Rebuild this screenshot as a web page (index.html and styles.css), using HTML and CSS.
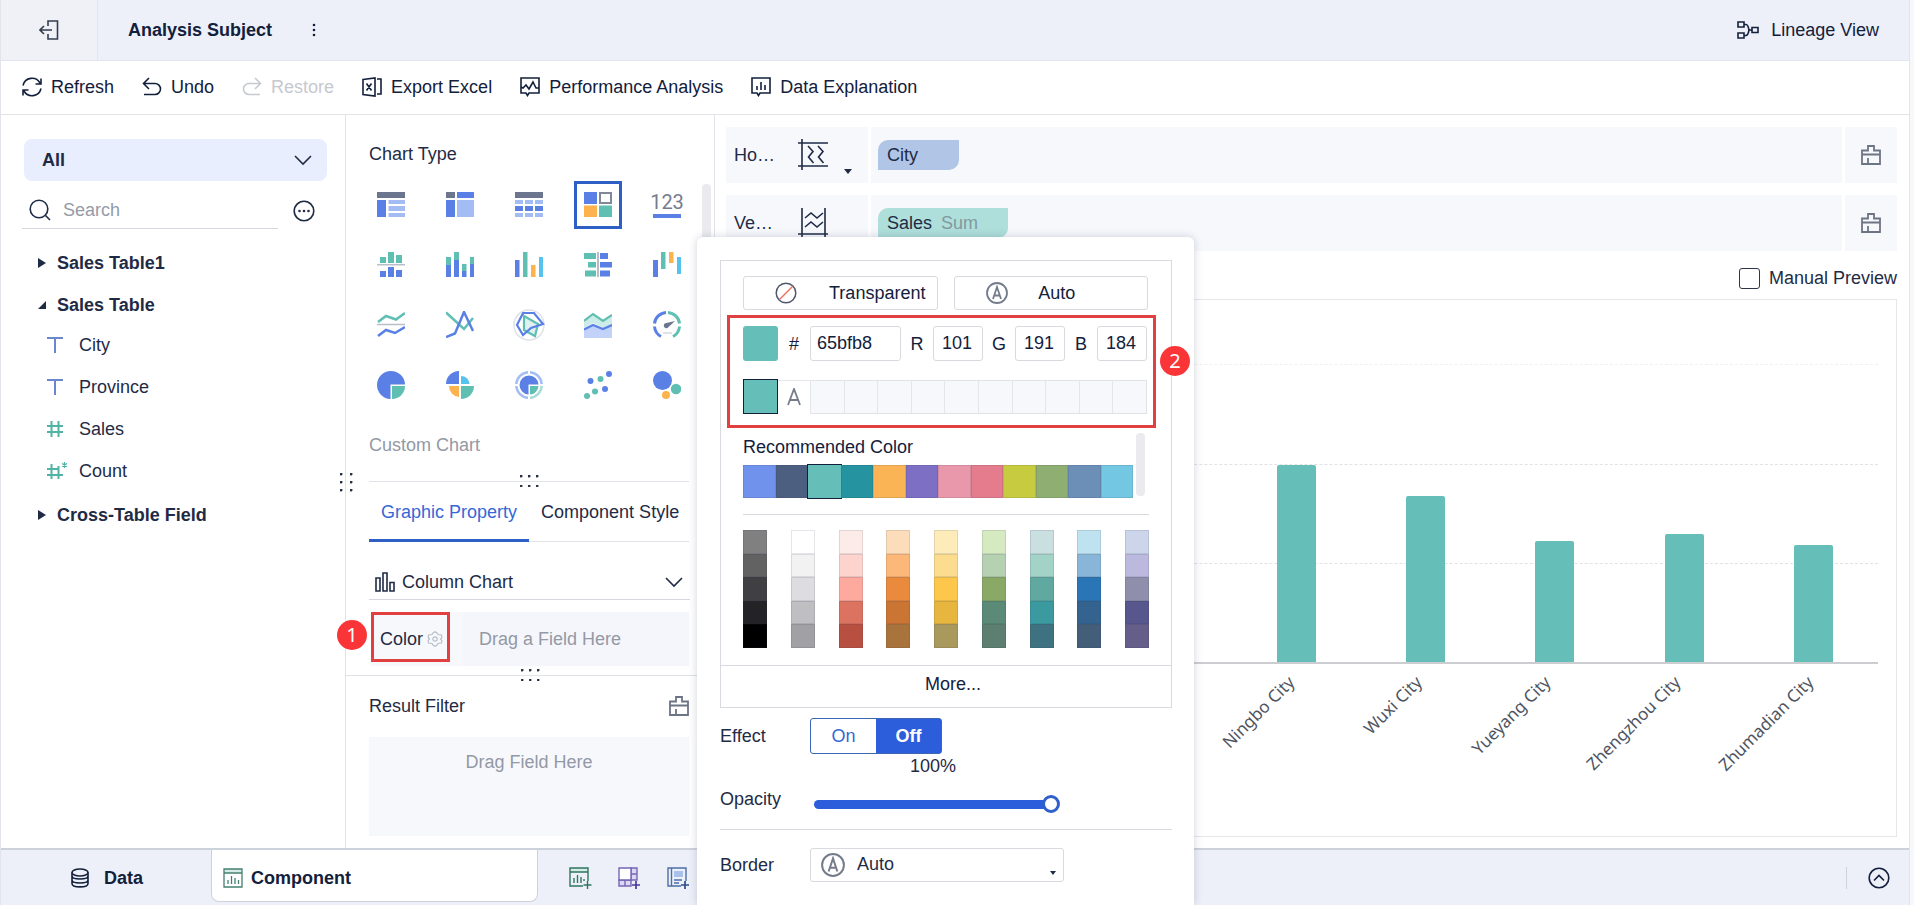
FILE: index.html
```html
<!DOCTYPE html>
<html lang="en">
<head>
<meta charset="utf-8">
<meta name="viewport" content="width=device-width, initial-scale=1">
<title>Analysis Subject</title>
<link rel="stylesheet" href="styles.css">
</head>
<body>
<div class="app">
  <header class="header">
    <button class="exit" aria-label="Exit">
      <svg class="line" width="20" height="20" viewBox="0 0 20 20"><path d="M9 6V1h9.500v18H9v-5M1 10h12M5 6l-4 4 4 4"/></svg>
    </button>
    <h1 class="title">Analysis Subject</h1>
    <button class="icon-btn" aria-label="More actions">
      <svg width="4" height="14" viewBox="0 0 4 14" fill="currentColor"><circle cx="2" cy="2" r="1.300"/><circle cx="2" cy="7" r="1.300"/><circle cx="2" cy="12" r="1.300"/></svg>
    </button>
    <a class="lineage" href="#lineage">
      <svg class="line" width="22" height="18" viewBox="0 0 22 18"><path d="M1 1h6v5H1zM1 12h6v5H1zM15 6.500h6v5h-6zM7 3.500h2c2 0 3 5.500 3 5.500s-1 5.500-3 5.500H7M12 9h3"/></svg>
      Lineage View
    </a>
  </header>

  <nav class="toolbar" aria-label="Tools">
    <button class="tool"><svg class="line" width="20" height="20" viewBox="0 0 20 20"><path d="M1 8.500A9.200 9.200 0 0 1 18 6M19 1.500V7h-5.500M19 11.500A9.200 9.200 0 0 1 2 14M1 18.500V13h5.500"/></svg>Refresh</button>
    <button class="tool"><svg class="line" width="20" height="20" viewBox="0 0 20 20"><path d="M7 1L1.500 6.500 7 12M1.500 6.500H13a5.500 5.500 0 0 1 0 11H2"/></svg>Undo</button>
    <button class="tool" disabled><svg class="line" width="20" height="20" viewBox="0 0 20 20"><path d="M13 1l5.500 5.500L13 12M18.500 6.500H7a5.500 5.500 0 0 0 0 11h11"/></svg>Restore</button>
    <button class="tool"><svg class="line" width="20" height="20" viewBox="0 0 20 20"><path d="M1 2.500L13 1v18L1 17.500zM15 2h4v15h-4M4.500 6.500l5 7M9.500 6.500l-5 7"/></svg>Export Excel</button>
    <button class="tool"><svg class="line" width="20" height="20" viewBox="0 0 20 20"><path d="M1 1h18v15H9l-1.500 2.500L6 16H1zM1 10l2 1 3-3 3 4 4-7 3 6h3"/></svg>Performance Analysis</button>
    <button class="tool"><svg class="line" width="20" height="20" viewBox="0 0 20 20"><path d="M1 1h18v15H9l-1.500 2.500L6 16H1zM6 9v4M10 5v8M14 8v5"/></svg>Data Explanation</button>
  </nav>

  <main class="main">
    <aside class="fields">
      <div class="picker all">
        <select aria-label="Table scope"><option>All</option></select>
        <svg class="line" width="18" height="12" viewBox="0 0 18 12"><path d="M1 2l8 8 8-8"/></svg>
      </div>
      <div class="search-row">
        <label class="search">
          <svg class="line" width="22" height="22" viewBox="0 0 22 22"><circle cx="10" cy="10" r="8.800"/><path d="M16.500 16.500l4.500 4.500"/></svg>
          <input type="search" placeholder="Search" aria-label="Search">
        </label>
        <button class="icon-btn" aria-label="Field options">
          <svg class="line" width="22" height="22" viewBox="0 0 22 22"><circle cx="11" cy="11" r="9.800"/><g fill="currentColor" stroke="none"><circle cx="6.500" cy="11" r="1.300"/><circle cx="11" cy="11" r="1.300"/><circle cx="15.500" cy="11" r="1.300"/></g></svg>
        </button>
      </div>
      <ul class="tree">
        <li class="group"><svg width="8" height="10" viewBox="0 0 8 10"><path fill="currentColor" d="M0 0l8 5-8 5z"/></svg>Sales Table1</li>
        <li class="group"><svg width="8" height="10" viewBox="0 0 8 10"><path fill="currentColor" d="M8 1v8H0z"/></svg>Sales Table</li>
        <li class="field text-field"><svg width="22" height="18" viewBox="0 0 22 18"><path d="M1 2h16M9 2v15"/></svg>City</li>
        <li class="field text-field"><svg width="22" height="18" viewBox="0 0 22 18"><path d="M1 2h16M9 2v15"/></svg>Province</li>
        <li class="field number-field"><svg width="22" height="18" viewBox="0 0 22 18"><path d="M1 6h16M1 12h16M5.500 1v16M12.500 1v16"/></svg>Sales</li>
        <li class="field number-field"><svg width="22" height="18" viewBox="0 0 22 18"><path d="M1 7h12M1 13h16M5.500 2v15M12.500 4v13"/><path class="thin" d="M18.500 0v6M16 1.500l5 3M21 1.500l-5 3"/></svg>Count</li>
        <li class="group"><svg width="8" height="10" viewBox="0 0 8 10"><path fill="currentColor" d="M0 0l8 5-8 5z"/></svg>Cross-Table Field</li>
      </ul>
      <span class="grip grip-side"></span>
    </aside>

    <section class="config">
      <div class="chart-types">
        <h2 class="label">Chart Type</h2>
        <div class="type-grid">
          <button aria-label="Group table"><svg width="28" height="28" viewBox="0 0 28 28"><path fill="#6b768e" d="M0 1h28v6H0z"/><path fill="#5a80e6" d="M0 9h9v17H0z"/><path fill="#a3bdf4" d="M11.500 9H28v4H11.500zM11.500 15H28v5H11.500zM11.500 22H28v4H11.500z"/></svg></button>
          <button aria-label="Cross table"><svg width="28" height="28" viewBox="0 0 28 28"><path fill="#6b768e" d="M0 1h9v6H0z"/><path fill="#5a80e6" d="M11 1h17v6H11zM0 9h9v17H0z"/><path fill="#a3bdf4" d="M11 9h17v17H11z"/></svg></button>
          <button aria-label="Detail table"><svg width="28" height="28" viewBox="0 0 28 28"><path fill="#6b768e" d="M0 1h28v6H0z"/><path fill="#a3bdf4" d="M0 9h8v4H0zM10 9h8v4h-8zM20 9h8v4h-8zM0 22h8v4H0zM10 22h8v4h-8zM20 22h8v4h-8z"/><path fill="#5a80e6" d="M0 15h8v5H0zM10 15h8v5h-8zM20 15h8v5h-8z"/></svg></button>
          <button class="selected" aria-pressed="true" aria-label="Custom chart"><svg width="28" height="28" viewBox="0 0 28 28"><path fill="#5a80e6" d="M0 1h13v12H0z"/><path fill="#fcb34d" d="M0 14.500h13V26H0z"/><path fill="#5fbfb3" d="M15 14.500h13V26H15z"/><path fill="none" stroke="#808899" stroke-width="2" d="M16 2h11v10H16z"/></svg></button>
          <button class="kpi" aria-label="KPI card"><span>123</span></button>

          <button aria-label="Opposed column"><svg width="28" height="28" viewBox="0 0 28 28"><path fill="#5fbfb3" d="M3 6h6v6H3zM11 1h6v11h-6zM19 4h6v8h-6z"/><path fill="#b9bec8" d="M0 13h28v1.500H0z"/><path fill="#5a80e6" d="M3 20h6v6H3zM11 16h6v10h-6zM19 19h6v7h-6z"/></svg></button>
          <button aria-label="Stacked column"><svg width="28" height="28" viewBox="0 0 28 28"><path fill="#5fbfb3" d="M0 6h5v8H0zM8 1h5v8H8zM16 13h4.500v7H16zM24 6h4.500v7H24z"/><path fill="#5a80e6" d="M0 14h5v12H0zM8 9h5v17H8zM16 20h4.500v6H16zM24 13h4.500v13H24z"/></svg></button>
          <button aria-label="Column"><svg width="28" height="28" viewBox="0 0 28 28"><path fill="#5a80e6" d="M0 9h4.500v17H0z"/><path fill="#5fbfb3" d="M8 1h4.500v25H8z"/><path fill="#fcb34d" d="M16 14h4.500v12H16z"/><path fill="#56c3ee" d="M24 6h4.500v20H24z"/></svg></button>
          <button aria-label="Opposed bar"><svg width="28" height="28" viewBox="0 0 28 28"><path fill="#5fbfb3" d="M0 2h12v6H0zM4 11h8v5.500H4zM1 19.500h11v6H1z"/><path fill="#a6adb9" d="M13.200 1h1.600v25h-1.600z"/><path fill="#5a80e6" d="M16 2h8v6h-8zM16 11h12v5.500H16zM16 19.500h10v6H16z"/></svg></button>
          <button aria-label="Waterfall"><svg width="28" height="28" viewBox="0 0 28 28"><path fill="#5a80e6" d="M0 9h5v17H0z"/><path fill="#5fbfb3" d="M8 1h4.500v17H8z"/><path fill="#fcb34d" d="M16 1h4.500v11H16z"/><path fill="#56c3ee" d="M24 6h4.500v17H24z"/></svg></button>

          <button aria-label="Range line"><svg width="28" height="28" viewBox="0 0 28 28" fill="none" stroke-width="2.500"><path stroke="#5fbfb3" d="M1 11l8-6 10 3.500L28 2"/><path stroke="#b9bec8" stroke-width="1.500" d="M0 13.500h28"/><path stroke="#5a80e6" d="M1 25l8-6 9 3 10-6"/></svg></button>
          <button aria-label="Line"><svg width="28" height="28" viewBox="0 0 28 28" fill="none" stroke-width="2.500"><path stroke="#5fbfb3" d="M0 1.500L18 18l9-11"/><path stroke="#5a80e6" d="M0 26l9-3.500L18 1l9 19"/></svg></button>
          <button aria-label="Radar"><svg width="32" height="32" viewBox="0 0 32 32" fill="none" stroke-width="2.200"><circle cx="16" cy="16" r="15" stroke="#dfe2e8" stroke-width="1.500"/><path stroke="#5fbfb3" fill="#dff2ef" d="M11 7l14 8-3 12-11-6z"/><path stroke="#5a80e6" d="M10 4h11l9 11-12 4-8 7-6-10z"/></svg></button>
          <button aria-label="Area"><svg width="28" height="28" viewBox="0 0 28 28"><path fill="#cdebe7" d="M0 9l9-6 10 6 9-4v9l-8 3-11-5-9 5z"/><path fill="#c3d2f8" d="M0 19l9-5 10 4 9-4v13H0z"/><path fill="none" stroke="#5fbfb3" stroke-width="2.200" d="M0 10l9-7 10 7 9-6"/><path fill="none" stroke="#5a80e6" stroke-width="2.200" d="M0 18.500L9 14l10 4 9-4"/></svg></button>
          <button aria-label="Gauge"><svg width="28" height="28" viewBox="0 0 28 28" fill="none" stroke-width="3"><path stroke="#5a80e6" d="M1.500 12.500A12.500 12.500 0 0 1 13 1.500M1.500 15.500A12.500 12.500 0 0 0 8 25.500"/><path stroke="#5fbfb3" d="M15 1.500A12.500 12.500 0 0 1 26.500 12.500M26.500 15.500A12.500 12.500 0 0 1 20 25.500"/><path stroke="#d3d7de" stroke-width="1.500" d="M10 22h9"/><path fill="#6b768e" d="M22 10l-6.500 6a2.600 2.600 0 1 1-2-4z"/></svg></button>

          <button aria-label="Pie"><svg width="28" height="28" viewBox="0 0 28 28"><path fill="#5a80e6" d="M13.500 28A14 14 0 1 1 28 13.500H13.500z"/><path fill="#5fbfb3" d="M15 15h13a13 13 0 0 1-13 13z"/></svg></button>
          <button aria-label="Rose"><svg width="28" height="28" viewBox="0 0 28 28"><path fill="#5a80e6" d="M13 0v13H0A13 13 0 0 1 13 0z"/><path fill="#56c3ee" d="M15 5a8.500 8.500 0 0 1 8.500 8H15z"/><path fill="#fcb34d" d="M3 15h10v11A11 11 0 0 1 3 15z"/><path fill="#5fbfb3" d="M15 15h13a13 13 0 0 1-13 13z"/></svg></button>
          <button aria-label="Multi-layer pie"><svg width="28" height="28" viewBox="0 0 28 28" fill="none"><path stroke="#a3bdf4" stroke-width="2.500" d="M13 1.300A12.700 12.700 0 0 0 1.300 13M15 1.300A12.700 12.700 0 0 1 26.700 13M1.300 15A12.700 12.700 0 0 0 13 26.700"/><path stroke="#a9dcd6" stroke-width="2.500" d="M26.700 15A12.700 12.700 0 0 1 15 26.700"/><path fill="#5a80e6" d="M13.500 23.500A9.500 9.500 0 1 1 23.500 13.500h-10z"/><path fill="#5fbfb3" d="M15 15h8.500a9 9 0 0 1-8.500 8.500z"/></svg></button>
          <button aria-label="Scatter"><svg width="28" height="28" viewBox="0 0 28 28"><g fill="#5a80e6"><circle cx="6.500" cy="10" r="3"/><circle cx="25" cy="3" r="3"/><circle cx="21" cy="18" r="3"/></g><g fill="#5fbfb3"><circle cx="16.500" cy="8" r="3"/><circle cx="11" cy="20.500" r="3"/><circle cx="3" cy="25" r="3"/></g></svg></button>
          <button aria-label="Bubble"><svg width="28" height="28" viewBox="0 0 28 28"><circle cx="9.500" cy="9.500" r="9.500" fill="#5a80e6"/><circle cx="23" cy="18" r="5.200" fill="#5fbfb3"/><circle cx="13" cy="24" r="4" fill="#fcb34d"/></svg></button>
        </div>
        <p class="custom">Custom Chart</p>
        <span class="scrollbar"></span>
        <span class="grip"></span>
      </div>
      <div class="tabs">
        <button class="tab active">Graphic Property</button>
        <button class="tab">Component Style</button>
      </div>
      <div class="picker shape">
        <svg class="line" width="20" height="20" viewBox="0 0 20 20"><path d="M1 6h4v13H1zM8 1h4v18H8zM15 10.500h4V19h-4z"/></svg>
        <select aria-label="Shape"><option>Column Chart</option></select>
        <svg class="line" width="18" height="12" viewBox="0 0 18 12"><path d="M1 2l8 8 8-8"/></svg>
      </div>
      <div class="color-row">
        <button class="color-btn">Color
          <svg width="16" height="16" viewBox="0 0 16 16" fill="none" stroke="#b9bfca" stroke-width="1.200"><path d="M6 2l2-1.300L10 2l1 1.500 3.500.5.300 2.500L13.500 8l1.300 1.500-.3 2.500-3.500.500L10 14l-2 1.300L6 14l-1-1.500L1.500 12l-.3-2.500L2.500 8 1.200 6.500 1.500 4 5 3.500z"/><circle cx="8" cy="8" r="2.200"/></svg>
        </button>
        <div class="drop">Drag a Field Here</div>
        <span class="badge badge-one">1</span>
      </div>
      <div class="filter">
        <span class="grip"></span>
        <div class="filter-head">
          <h2 class="label">Result Filter</h2>
          <button class="icon-btn brush" aria-label="Clear filter"><svg class="line" width="20" height="20" viewBox="0 0 20 20"><path d="M1 5.500h6V1h6v4.500h6V19H1zM1 9.500h18M7 13v6"/></svg></button>
        </div>
        <div class="filter-drop">Drag Field Here</div>
      </div>
    </section>

    <section class="canvas">
      <div class="axes">
        <div class="axis">
          <div class="axis-label"><span>Ho…</span>
            <svg class="line" width="30" height="32" viewBox="0 0 30 32"><path d="M0 4h30M0 27h30M4 0v31M10 7l5 5.500-4.500 5.500 5 6M20 7l5 5.500-4.500 5.500 5 6"/></svg>
            <svg class="caret" width="8" height="5" viewBox="0 0 8 5"><path fill="currentColor" d="M0 0h8L4 5z"/></svg>
          </div>
          <div class="axis-drop"><span class="pill city">City</span></div>
          <button class="axis-clear brush" aria-label="Clear horizontal axis"><svg class="line" width="20" height="20" viewBox="0 0 20 20"><path d="M1 5.500h6V1h6v4.500h6V19H1zM1 9.500h18M7 13v6"/></svg></button>
        </div>
        <div class="axis">
          <div class="axis-label"><span>Ve…</span>
            <svg class="line" width="30" height="32" viewBox="0 0 30 32"><path d="M4 1v30M27 1v30M0 27h30M7 11l6-5 6 5 6-5M7 20l6-5 6 5 6-5"/></svg>
            <svg class="caret" width="8" height="5" viewBox="0 0 8 5"><path fill="currentColor" d="M0 0h8L4 5z"/></svg>
          </div>
          <div class="axis-drop"><span class="pill sales">Sales <span class="agg">Sum</span></span></div>
          <button class="axis-clear brush" aria-label="Clear vertical axis"><svg class="line" width="20" height="20" viewBox="0 0 20 20"><path d="M1 5.500h6V1h6v4.500h6V19H1zM1 9.500h18M7 13v6"/></svg></button>
        </div>
      </div>
      <label class="manual"><input type="checkbox">Manual Preview</label>
      <div class="preview">
        <div class="plot">
          <div class="gridlines"><i></i><i></i><i></i></div>
          <div class="bars" id="bars"></div>
        </div>
        <div class="ticks" id="ticks"></div>
      </div>
    </section>
  </main>

  <footer class="footer">
    <button class="foot-tab data"><svg class="line" width="20" height="20" viewBox="0 0 20 20"><path d="M2 4.500v11c0 4.500 16 4.500 16 0v-11M2 8c0 4 16 4 16 0M2 12c0 4 16 4 16 0"/><ellipse cx="10" cy="4.500" rx="8" ry="3.500"/></svg>Data</button>
    <button class="foot-tab component"><svg width="20" height="20" viewBox="0 0 20 20" fill="none" stroke="#45806f" stroke-width="1.300"><path fill="#d5ebe5" stroke="none" d="M1 1h18v4H1z"/><path d="M1 1h18v18H1zM1 5h18M5 12v4M8.500 8v8M12 10v6M15.500 12v4"/></svg>Component</button>
    <div class="foot-add">
      <button class="icon-btn" aria-label="Add component"><svg width="23" height="23" viewBox="0 0 23 23" fill="none" stroke="#2f7560" stroke-width="1.400"><path fill="#d5ebe5" stroke="none" d="M1 1h18v4H1z"/><path d="M19 14V1H1v18h13M1 5h18M5 11v5M8.500 8v8M12 10v6M15 12v2M18.500 14v8M14.500 18h8"/></svg></button>
      <button class="icon-btn" aria-label="Add dashboard"><svg width="23" height="23" viewBox="0 0 23 23" fill="none" stroke="#7565b5" stroke-width="1.400"><path fill="#dcd7f2" d="M13 1h6v12h-6zM1 13h12v6H1z"/><path fill="#fff" d="M1 1h12v12H1z"/><path d="M13 7h6M7 13v6"/><path stroke="#4a379c" stroke-width="1.700" d="M18 14v8M14 18h8"/></svg></button>
      <button class="icon-btn" aria-label="Add document"><svg width="23" height="23" viewBox="0 0 23 23" fill="none" stroke="#4c6ea8" stroke-width="1.400"><path d="M19 14V1H1v18h13M4.500 1v18M7 13h8M7 16h5"/><path fill="#a9c0ea" stroke="none" d="M7 4h9v6H7z"/><path stroke="#2e4d8b" stroke-width="1.700" d="M18 14v8M14 18h8"/></svg></button>
    </div>
    <div class="foot-right">
      <button class="icon-btn" aria-label="Expand"><svg class="line" width="22" height="22" viewBox="0 0 22 22"><circle cx="11" cy="11" r="9.800"/><path d="M6 13.500l5-5 5 5"/></svg></button>
    </div>
  </footer>

  <div class="popup" role="dialog" aria-label="Color settings">
    <div class="picker-box">
      <div class="presets">
        <button class="preset"><svg width="22" height="22" viewBox="0 0 22 22" fill="none"><circle cx="11" cy="11" r="9.800" stroke="#50586c" stroke-width="1.500"/><path stroke="#f0705f" stroke-width="1.500" d="M4.500 17.500l13-13"/></svg><span>Transparent</span></button>
        <button class="preset"><svg class="auto" width="22" height="22" viewBox="0 0 22 22"><circle cx="11" cy="11" r="10"/><path d="M7 17l4-12 4 12M8.200 13.500h5.600"/></svg><span>Auto</span></button>
      </div>
      <div class="values">
        <div class="rgb">
          <span class="swatch"></span>
          <label for="hex">#</label><input id="hex" class="hex" value="65bfb8">
          <label for="red">R</label><input id="red" value="101">
          <label for="green">G</label><input id="green" value="191">
          <label for="blue">B</label><input id="blue" value="184">
        </div>
        <div class="recent">
          <button class="swatch current" aria-label="Current color"></button>
          <button class="auto-cell" aria-label="Auto color"><svg class="auto" width="14" height="18" viewBox="0 0 14 18"><path d="M1 17L7 1l6 16M3.200 12h7.600"/></svg></button>
          <div class="slots"><i></i><i></i><i></i><i></i><i></i><i></i><i></i><i></i><i></i><i></i></div>
        </div>
        <span class="badge badge-two">2</span>
      </div>
      <div class="recommended">
        <h2 class="label">Recommended Color</h2>
        <div class="strip" id="strip"></div>
        <span class="scrollbar small"></span>
      </div>
      <div class="palette" id="palette"></div>
      <button class="more">More...</button>
    </div>
    <div class="row effect">
      <span class="row-label">Effect</span>
      <div class="toggle"><button>On</button><button class="active" aria-pressed="true">Off</button></div>
    </div>
    <div class="row opacity">
      <label class="row-label" for="opacity">Opacity</label>
      <div class="slider"><output for="opacity">100%</output><input id="opacity" type="range" min="0" max="100" value="100"></div>
    </div>
    <div class="row border">
      <label class="row-label" for="border">Border</label>
      <div class="picker border-picker">
        <svg class="auto" width="24" height="24" viewBox="0 0 22 22"><circle cx="11" cy="11" r="10"/><path d="M7 17l4-12 4 12M8.200 13.500h5.600"/></svg>
        <select id="border"><option>Auto</option></select>
        <svg class="caret" width="6" height="4" viewBox="0 0 6 4"><path fill="currentColor" d="M0 0h6L3 4z"/></svg>
      </div>
    </div>
  </div>
</div>
<script src="app.js"></script>
</body>
</html>
```
FILE: styles.css
```css
* { box-sizing: border-box; }
body { margin: 0; background: #f7f8f9; color: #1f2b45; font: 18px/24px "Liberation Sans", Arial, sans-serif; }
h1, h2, p, ul { margin: 0; padding: 0; font-size: 18px; font-weight: 400; list-style: none; }
button, input, select { font: inherit; color: inherit; background: none; border: 0; margin: 0; padding: 0; border-radius: 0; outline: 0; }
button { cursor: pointer; }
select { appearance: none; width: 100%; height: 100%; }
svg { display: block; flex: none; }
.line { fill: none; stroke: currentColor; stroke-width: 1.6; }
.auto { fill: none; stroke: #747b8b; stroke-width: 1.8; }
.icon-btn { display: flex; align-items: center; justify-content: center; }
.brush { color: #6d7484; }
.brush .line { stroke-width: 1.8; }

.app { position: relative; display: flex; flex-direction: column; min-height: 100vh; margin-right: 4px; border: solid #e1e4ea; border-width: 0 1px; background: #fff; overflow: hidden; }

.header { display: flex; align-items: center; height: 61px; background: #edf0f9; border-bottom: 1px solid #e2e5ec; color: #13203c; }
.exit { display: flex; align-items: center; justify-content: center; width: 97px; height: 60px; border-right: 1px solid #e2e5ee; background: #eff1f7; color: #343c50; }
.title { margin: 0 40px 0 30px; font-weight: 700; }
.lineage { display: flex; align-items: center; gap: 12px; margin: 0 30px 0 auto; color: inherit; text-decoration: none; }

.toolbar { display: flex; align-items: center; gap: 28px; height: 54px; padding: 0 0 2px 21px; border-bottom: 1px solid #e2e4e8; color: #13203c; }
.tool { display: flex; align-items: center; gap: 9px; white-space: nowrap; }
.tool:disabled { color: #c6c9d0; }

.main { display: grid; grid-template-columns: 345px 369px minmax(0, 1fr); flex: 1; }

.fields { position: relative; padding: 24px 18px 0 21px; border-right: 1px solid #e0e3e8; }
.picker { position: relative; display: flex; align-items: center; }
.picker > .line:last-child { pointer-events: none; }
.all { height: 42px; margin-left: 2px; padding-right: 15px; border-radius: 8px; background: #e8eefd; }
.all select { padding-left: 18px; font-weight: 700; }
.search-row { display: flex; align-items: center; gap: 15px; height: 48px; }
.search { display: flex; align-items: center; gap: 12px; flex: 1; height: 48px; padding: 10px 0 0 7px; border-bottom: 1px solid #d5d8de; }
.search input { width: 100%; }
.search input::placeholder { color: #969ba7; opacity: 1; }
.search-row .icon-btn { margin: 12px 12px 0 0; }
.tree { padding: 13px 0 0 16px; }
.tree li { display: flex; align-items: center; height: 42px; }
.group { gap: 11px; font-weight: 700; }
.field { gap: 11px; padding: 0 0 4px 8px; }
.field path { fill: none; stroke-width: 2; }
.field .thin { stroke-width: 1.3; }
.text-field path { stroke: #6a87cc; }
.number-field path { stroke: #50b3a5; }

.grip { position: absolute; left: 50%; bottom: -6px; width: 20px; height: 12px; margin-left: -9px; background: radial-gradient(circle at 1px 1px, #2b3347 1px, transparent 2px) 0 0 / 8px 10px; }
.grip-side { left: auto; right: -8px; bottom: auto; top: 358px; width: 13px; height: 19px; background-size: 10px 8px; }

.config { display: flex; flex-direction: column; border-right: 1px solid #e0e3e8; }
.chart-types { position: relative; margin: 0 25px 0 23px; padding: 27px 0 24px; border-bottom: 1px solid #dfe2e7; }
.type-grid { display: grid; grid-template-columns: repeat(5, 48px); gap: 12px 21px; margin: 15px -4px 24px -2px; }
.type-grid button { display: flex; align-items: center; justify-content: center; height: 48px; }
.type-grid .selected { border: 3px solid #2d5fc4; }
.kpi span { width: 28px; padding-bottom: 2px; border-bottom: 4px solid #5a80e6; color: #747d8e; font: 20px/20px Roboto, sans-serif; display: flex; justify-content: center; }
.custom { color: #9399a5; }
.scrollbar { position: absolute; top: 69px; right: -22px; width: 9px; height: 110px; border-radius: 4px; background: #ebebef; }
.tabs { display: flex; margin: 0 25px 0 23px; border-bottom: 1px solid #dfe2e7; }
.tab { height: 59px; padding: 0 12px; white-space: nowrap; }
.tab.active { margin-bottom: -1px; border-bottom: 3px solid #2d5fc4; color: #3567d6; height: 60px; padding-top: 3px; }
.shape { height: 35px; margin: 23px 24px 0 23px; padding: 0 7px 0 6px; border-bottom: 1px solid #d5d8de; }
.shape select { padding-left: 7px; }
.color-row { position: relative; display: flex; height: 54px; margin: 12px 25px 9px 25px; gap: 13px; background: #f7f8fb; }
.color-btn { display: flex; align-items: center; gap: 4px; height: 50px; padding: 3px 4px 0 6px; border: 3px solid #e0403f; white-space: nowrap; }
.drop { display: flex; align-items: center; flex: 1; padding-left: 16px; background: #f5f6fb; color: #9399a5; }
.badge { position: absolute; display: flex; align-items: center; justify-content: center; width: 30px; height: 30px; border-radius: 50%; background: #fa3538; color: #fff; font: 20px/30px "Noto Sans", sans-serif; }
.badge-one { left: -34px; top: 8px; }
.filter { position: relative; display: flex; flex-direction: column; flex: 1; padding: 18px 25px 12px 23px; border-top: 1px solid #dfe2e7; }
.filter .grip { top: -7px; bottom: auto; }
.filter-head { display: flex; justify-content: space-between; align-items: center; }
.filter-drop { flex: 1; margin-top: 19px; padding-top: 13px; background: #f7f8fc; color: #9399a5; text-align: center; }

.canvas { display: flex; flex-direction: column; padding: 12px 12px 11px 11px; }
.axes { display: grid; gap: 12px; }
.axis { display: grid; grid-template-columns: 142px 1fr 52px; gap: 3px; height: 56px; }
.axis > * { background: #f7f8fc; }
.axis-label { display: flex; align-items: center; padding-left: 8px; }
.axis-label span { width: 64px; }
.axis-label .caret { margin: 32px 0 0 16px; }
.axis-drop { display: flex; align-items: center; padding-left: 7px; }
.axis-clear { display: flex; align-items: center; justify-content: center; }
.pill { padding: 3px 30px 3px 9px; border-radius: 10px 0; }
.city { padding-right: 41px; background: #b1c5e6; }
.sales { background: #aedfdb; }
.agg { margin-left: 4px; color: #82999f; }
.manual { display: flex; align-items: center; justify-content: flex-end; gap: 9px; height: 48px; padding-top: 6px; }
.manual input { appearance: none; width: 21px; height: 21px; border: 1px solid #2d3548; border-radius: 3px; }

.preview { display: flex; flex-direction: column; flex: 1; border: 1px solid #e5e7ea; }
.plot { position: relative; flex: 1; margin: 0 18px 0 117px; border-bottom: 2px solid #cccdd0; }
.gridlines { position: absolute; inset: 0; display: flex; flex-direction: column-reverse; }
.gridlines i { height: 27.4%; border-top: 1px dashed #e2e2e5; }
.gridlines i:last-child { border-color: #f0f0f2; }
.bars, .ticks { display: grid; grid-template-columns: repeat(8, 1fr); }
.bars { position: absolute; inset: 0; align-items: end; justify-items: center; }
.bar { width: 39px; border-radius: 2px 2px 0 0; background: #65bfb8; }
.ticks { height: 172px; margin: 0 18px 0 117px; padding-top: 8px; color: #50545f; font: 17px/20px "Noto Sans", sans-serif; }
.tick { display: flex; justify-content: flex-end; margin-right: calc(50% + 8px); white-space: nowrap; }
.tick span { height: 20px; transform: rotate(-45deg); transform-origin: top right; }
.bar:first-child, .tick:first-child { grid-column-start: 4; }

.footer { display: flex; align-items: flex-start; height: 57px; border-top: 2px solid #ccd2dc; background: #edf0f8; color: #13203c; }
.foot-tab { display: flex; align-items: center; font-weight: 700; }
.data { gap: 14px; width: 210px; height: 54px; padding: 1px 0 0 69px; }
.component { gap: 8px; width: 327px; height: 52px; padding: 4px 0 0 11px; border: solid #cdd1da; border-width: 0 1px 1px; border-radius: 0 0 8px 8px; background: #fff; }
.foot-add { display: flex; gap: 26px; height: 54px; padding: 3px 0 0 31px; }
.foot-right { display: flex; align-items: center; height: 22px; margin: 17px 19px 0 auto; padding-left: 21px; border-left: 1px solid #cdd1da; }

.popup { position: absolute; left: 696px; top: 237px; bottom: 0; width: 497px; padding: 23px 22px 0 23px; border-radius: 6px 6px 0 0; background: #fff; box-shadow: 0 0 8px rgba(40, 50, 80, 0.22); }
.picker-box { border: 1px solid #d8dadf; color: #13203c; }
.presets { display: grid; grid-template-columns: 1fr 1fr; gap: 16px; padding: 15px 23px 5px 22px; }
.preset { display: grid; grid-template-columns: 22px 1fr; gap: 21px; align-items: center; height: 34px; padding-left: 31px; border: 1px solid #d8dadf; border-radius: 3px; }
.preset + .preset span { padding-right: 62px; }
.values { position: relative; margin: 0 15px 0 6px; padding: 8px 6px 11px 13px; border: 3px solid #e0403f; }
.rgb, .recent { display: flex; align-items: center; }
.rgb input { width: 50px; height: 35px; padding-left: 8px; border: 1px solid #d8dadf; border-radius: 3px; }
.rgb .hex { width: 91px; padding-left: 6px; }
.rgb label { flex: 1; text-align: center; }
.swatch { width: 35px; height: 35px; border-radius: 3px; background: #65bfb8; }
.recent { margin-top: 18px; }
.current { border: 1px solid #13203c; border-radius: 0; }
.auto-cell { display: flex; align-items: center; justify-content: center; width: 32px; height: 34px; border-top: 1px solid #e4e6ea; }
.slots { display: grid; grid-template-columns: repeat(10, 1fr); flex: 1; height: 34px; border: solid #e0e2e6; border-width: 1px 1px 1px 0; background: #f7f8fb; }
.slots i { border-left: 1px solid #e4e6ea; }
.badge-two { right: -37px; top: 28px; }
.recommended { position: relative; margin: 0 22px; padding: 7px 16px 16px 0; border-bottom: 1px solid #d8dadf; }
.strip { display: grid; grid-template-columns: repeat(12, 1fr); height: 33px; margin-top: 6px; }
.strip button, .palette button { border: 1px solid rgba(40, 50, 70, 0.12); }
.strip .picked { margin: -1px; border: 1px solid #13203c; }
.scrollbar.small { top: 5px; right: 4px; height: 63px; }
.palette { display: grid; grid-template-columns: repeat(9, 24px); grid-template-rows: repeat(5, 1fr); grid-auto-flow: column; justify-content: space-between; height: 118px; margin: 15px 22px 17px; }
.more { display: block; width: 100%; height: 42px; padding: 0 0 6px 14px; border-top: 1px solid #d8dadf; }
.row { display: flex; }
.row-label { width: 90px; }
.effect { padding-top: 10px; }
.effect .row-label { padding-top: 6px; }
.toggle { display: grid; grid-template-columns: 1fr 1fr; width: 132px; height: 36px; border: 1px solid #3c66b4; border-radius: 3px; color: #3567d6; }
.toggle .active { background: #2c5edc; color: #fff; font-weight: 700; }
.opacity { padding-bottom: 15px; border-bottom: 1px solid #d8dadf; }
.opacity .row-label { padding-top: 33px; }
.slider { display: flex; flex-direction: column; gap: 17px; width: 250px; padding-left: 4px; }
.slider output { padding-left: 96px; }
.slider input { appearance: none; width: 246px; height: 19px; }
.slider input::-webkit-slider-runnable-track { height: 9px; border-radius: 5px; background: linear-gradient(90deg, #2c5edc 240px, transparent 240px); }
.slider input::-webkit-slider-thumb { appearance: none; width: 18px; height: 18px; margin-top: -5px; border: 3px solid #2f60cc; border-radius: 50%; background: #fff; }
.border { padding-top: 18px; align-items: center; }
.border-picker { width: 254px; height: 34px; padding: 0 7px 0 10px; border: 1px solid #d8dadf; border-radius: 3px; }
.border-picker select { padding: 0 0 3px 12px; }
.border-picker .caret { margin-top: 15px; }
```
FILE: app.js
```js
const sales = [
  ["Ningbo City", 54.4],
  ["Wuxi City", 45.8],
  ["Yueyang City", 33.5],
  ["Zhengzhou City", 35.5],
  ["Zhumadian City", 32.3]
];

const recommended = ["#7092ec", "#4d5f80", "#65bfb8", "#2593a0", "#fbb455", "#7c6fc4", "#e898aa", "#e47c8d", "#c7cb3f", "#8fae72", "#6c8fb8", "#73c7e3"];

const columns = [
  ["#808080", "#626262", "#404042", "#232325", "#000000"],
  ["#ffffff", "#f2f2f3", "#dddddf", "#bfbfc1", "#a1a1a3"],
  ["#fdebe8", "#fdd3cd", "#fda99e", "#dc7260", "#b85042"],
  ["#fddcba", "#fcb878", "#e98a3d", "#cb7535", "#a9733c"],
  ["#fdebba", "#fcdd8f", "#fcc74a", "#e6b63f", "#aa995c"],
  ["#d5eac1", "#b6d1b1", "#8aa967", "#5b8a76", "#5c7f70"],
  ["#c9dfe0", "#a3d2c7", "#60a9a0", "#3a9a9f", "#3f7280"],
  ["#bfe2f0", "#89b5d8", "#2a75b6", "#34638f", "#425e79"],
  ["#ccd5ea", "#bcb9de", "#8f8fac", "#57568d", "#655e88"]
];

function swatch(color) {
  const button = document.createElement("button");
  button.style.backgroundColor = color;
  button.setAttribute("aria-label", color);
  return button;
}

const bars = document.getElementById("bars");
const ticks = document.getElementById("ticks");
for (const [name, share] of sales) {
  const bar = document.createElement("div");
  bar.className = "bar";
  bar.style.height = share + "%";
  bars.append(bar);

  const tick = document.createElement("div");
  tick.className = "tick";
  const text = document.createElement("span");
  text.textContent = name;
  tick.append(text);
  ticks.append(tick);
}

const strip = document.getElementById("strip");
recommended.forEach((color, i) => {
  const button = swatch(color);
  if (i === 2) button.className = "picked";
  strip.append(button);
});

document.getElementById("palette").append(...columns.flat().map(swatch));
```
